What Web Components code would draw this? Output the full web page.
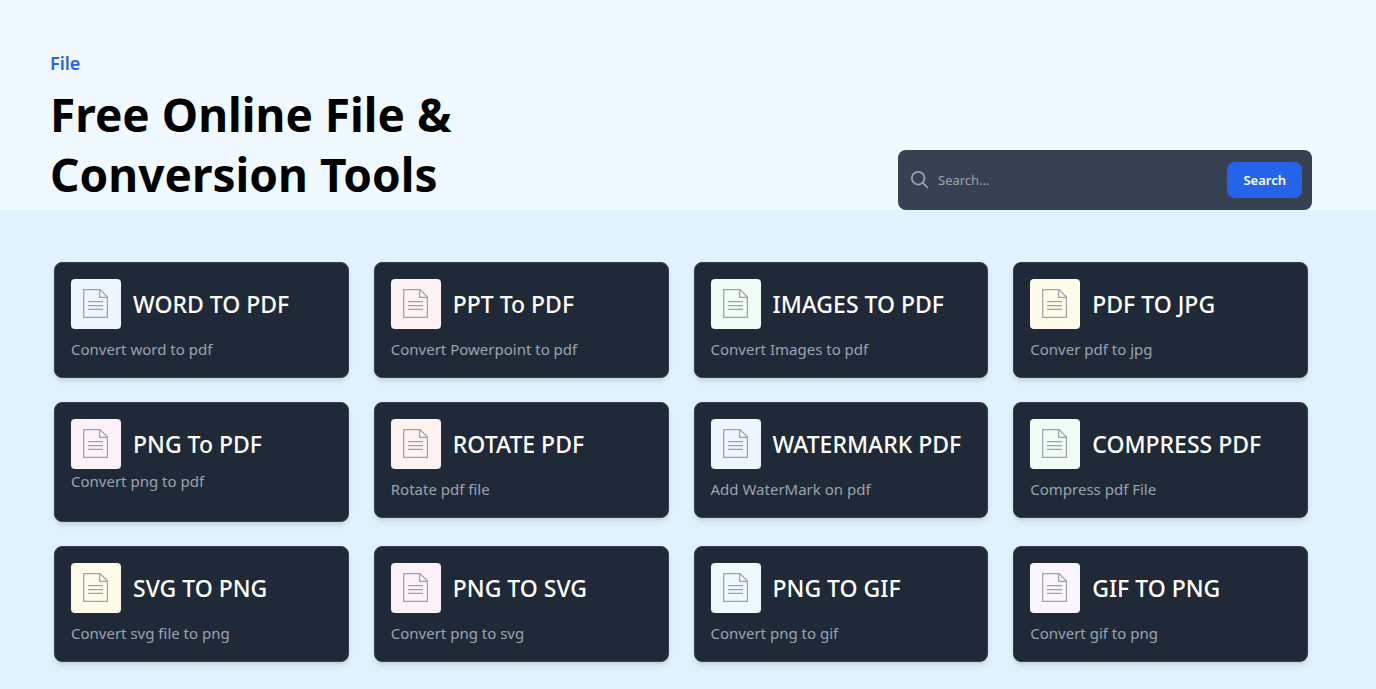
<!DOCTYPE html>
<html lang="en">
<head>
<meta charset="utf-8">
<meta name="viewport" content="width=device-width, initial-scale=1">
<title>Free Online File &amp; Conversion Tools</title>
<style>
  html { background: #e0f2fe; }
  body { margin: 0; font-family: "Noto Sans", "Open Sans", sans-serif; }
</style>
</head>
<body>
<tools-page></tools-page>

<template id="tools-page">
  <style>
    :host { display: block; }
    main { padding: 52px 68px 27px 54px; }
    .grid {
      display: grid;
      grid-template-columns: repeat(auto-fill, minmax(260px, 1fr));
      gap: 24px 25px;
      align-items: start;
    }
  </style>
  <page-hero>
    <span slot="eyebrow">File</span>
    <span slot="title">Free Online File &amp; Conversion Tools</span>
    <search-box slot="action"></search-box>
  </page-hero>
  <main><div class="grid">
    <tool-card tint="#eff6ff"><span slot="name">WORD TO PDF</span>Convert word to pdf</tool-card>
    <tool-card tint="#fef2f2"><span slot="name">PPT To PDF</span>Convert Powerpoint to pdf</tool-card>
    <tool-card tint="#f0fdf4"><span slot="name">IMAGES TO PDF</span>Convert Images to pdf</tool-card>
    <tool-card tint="#fefce8"><span slot="name">PDF TO JPG</span>Conver pdf to jpg</tool-card>
    <tool-card tint="#fdf2f8" compact><span slot="name">PNG To PDF</span>Convert png to pdf</tool-card>
    <tool-card tint="#fef2f2"><span slot="name">ROTATE PDF</span>Rotate pdf file</tool-card>
    <tool-card tint="#eff6ff"><span slot="name">WATERMARK PDF</span>Add WaterMark on pdf</tool-card>
    <tool-card tint="#f0fdf4"><span slot="name">COMPRESS PDF</span>Compress pdf File</tool-card>
    <tool-card tint="#fefce8"><span slot="name">SVG TO PNG</span>Convert svg file to png</tool-card>
    <tool-card tint="#fdf2f8"><span slot="name">PNG TO SVG</span>Convert png to svg</tool-card>
    <tool-card tint="#f0f9ff"><span slot="name">PNG TO GIF</span>Convert png to gif</tool-card>
    <tool-card tint="#faf5ff"><span slot="name">GIF TO PNG</span>Convert gif to png</tool-card>
  </div></main>
</template>

<template id="page-hero">
  <style>
    :host { display: block; background: #f0f9ff; }
    header {
      display: flex; flex-wrap: wrap; justify-content: space-between; align-items: flex-end;
      gap: 24px; padding: 49px 64px 0 50px;
    }
    .text { max-width: 448px; padding-bottom: 6px; }
    p { margin: 0; font-size: 18px; line-height: 28px; font-weight: 600; color: #2563eb; }
    h1 { margin: 7px 0 0; font-size: 46px; line-height: 60px; font-weight: 700; color: #000; }
  </style>
  <header>
    <div class="text">
      <p><slot name="eyebrow"></slot></p>
      <h1><slot name="title"></slot></h1>
    </div>
    <slot name="action"></slot>
  </header>
</template>

<template id="search-box">
  <style>
    :host { display: block; flex: 0 1 414px; min-width: 0; }
    form {
      display: flex; align-items: center; box-sizing: border-box; height: 60px;
      padding: 0 10px 0 12px; background: #374151; border-radius: 8px;
    }
    label { display: flex; flex: none; }
    input {
      flex: 1; min-width: 0; height: 36px; margin: 0; padding: 0 8px; border: 0; outline: 0;
      background: none; font: 400 13px/20px "Noto Sans", sans-serif; color: #fff;
    }
    input::placeholder { color: #9ca3af; opacity: 1; }
    button {
      flex: none; height: 36px; padding: 0 16px; border: 0; border-radius: 8px;
      background: #2563eb; color: #fff; cursor: pointer;
      font: 600 13px/20px "Noto Sans", sans-serif;
    }
  </style>
  <form role="search" onsubmit="return false">
    <label for="q" aria-label="Search">
      <svg width="20" height="20" viewBox="0 0 24 24" fill="none" stroke="#9ca3af" stroke-width="2.1" stroke-linecap="round" stroke-linejoin="round"><path d="m21 21-5.600-5.600"/><circle cx="9.800" cy="9.800" r="7.600"/></svg>
    </label>
    <input id="q" type="text" placeholder="Search...">
    <button type="submit">Search</button>
  </form>
</template>

<template id="tool-card">
  <style>
    :host {
      display: block; min-width: 0; padding: 16px; border: 1px solid #374151; border-radius: 8px;
      background: #1f2937; box-shadow: 0 4px 6px -1px rgb(0 0 0 / .1), 0 2px 4px -2px rgb(0 0 0 / .1);
    }
    .head { display: flex; align-items: center; gap: 12px; }
    .icon {
      display: grid; place-items: center; flex: none; width: 50px; height: 50px;
      border-radius: 4px; background: var(--tint);
    }
    h2 { margin: 0; font-size: 23px; line-height: 32px; font-weight: 500; color: #fff; white-space: nowrap; }
    p { margin: 8px 0 0; font-size: 15px; line-height: 24px; color: #9ca3af; }
    :host([compact]) p { margin: 0 0 12px; }
  </style>
  <div class="head">
    <div class="icon">
      <svg width="50" height="50" viewBox="0 0 50 50" fill="none" stroke="#9ca3af" stroke-width="1.25" aria-hidden="true">
        <path d="M12.700 10.600H29L36.400 18V38.400H12.700ZM28.600 10.600V18.300H36.400M17 22.600H32M17 26.500H32M17 30.400H32"/>
      </svg>
    </div>
    <h2><slot name="name"></slot></h2>
  </div>
  <p><slot></slot></p>
</template>

<script>
  const stamp = (host, id) =>
    host.attachShadow({ mode: 'open' }).append(document.getElementById(id).content.cloneNode(true));

  class ToolCard extends HTMLElement {
    constructor() { super(); stamp(this, 'tool-card'); }
    connectedCallback() { this.style.setProperty('--tint', this.getAttribute('tint')); }
  }
  class SearchBox extends HTMLElement { constructor() { super(); stamp(this, 'search-box'); } }
  class PageHero extends HTMLElement { constructor() { super(); stamp(this, 'page-hero'); } }
  class ToolsPage extends HTMLElement { constructor() { super(); stamp(this, 'tools-page'); } }

  customElements.define('tool-card', ToolCard);
  customElements.define('search-box', SearchBox);
  customElements.define('page-hero', PageHero);
  customElements.define('tools-page', ToolsPage);
</script>
</body>
</html>
